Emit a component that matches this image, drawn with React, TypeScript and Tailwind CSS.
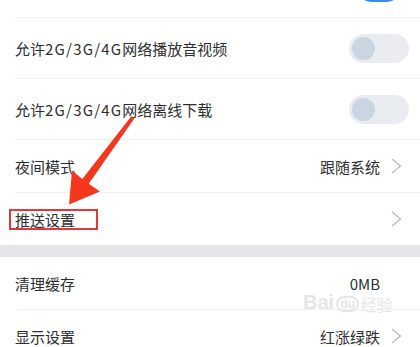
import React from "react";

function Toggle() {
  return (
    <div className="w-[60px] h-[29px] rounded-full bg-[#e9edf2] flex items-center px-[3px]">
      <div className="w-[23px] h-[23px] rounded-full bg-[#c9d5e1]" />
    </div>
  );
}

function Chevron() {
  return (
    <svg width="13" height="16" viewBox="0 0 13 16" className="shrink-0">
      <path d="M2 1 L10.5 8 L2 15" fill="none" stroke="#b4b8bd" strokeWidth="1.2" />
    </svg>
  );
}

function Sep({ left = "ml-[15px]" }: { left?: string }) {
  return <div className={`h-px bg-[#eef0f2] ${left}`} />;
}

function ToggleRow({ pre, latin, post }: { pre: string; latin: string; post: string }) {
  return (
    <div className="h-[60px] flex items-center justify-between pl-[15px] pr-[11px]">
      <span className="text-[15px] text-[#2e2e2e] leading-none">
        {pre}
        <span className="tracking-[1.2px]">{latin}</span>
        {post}
      </span>
      <Toggle />
    </div>
  );
}

function ValueRow({ label, value, chevron = true, boxed = false }: { label: string; value?: string; chevron?: boolean; boxed?: boolean }) {
  return (
    <div className="h-[52px] flex items-center pl-[15px] pr-[17px]">
      <span className={`text-[15px] text-[#2e2e2e] leading-none ${boxed ? "-ml-[6px] pl-[4px] pr-[21px] py-[1px] border-2 border-[#e8353b]" : ""}`}>{label}</span>
      <div className="flex-1" />
      {value && <span className="text-[15px] text-[#2e2e2e] leading-none">{value}</span>}
      {chevron ? <div className="ml-[10px] flex items-center"><Chevron /></div> : <div className="w-[23px]" />}
    </div>
  );
}

export default function App() {
  return (
    <div
      className="relative w-[420px] h-[347px] overflow-hidden bg-white"
      style={{ fontFamily: '"Noto Sans CJK SC", "Noto Sans", sans-serif' }}
    >
      <div className="h-[17px] overflow-hidden flex justify-end pr-[19px]">
        <div className="w-[44px] h-[29px] -mt-[27px] rounded-full bg-[#3d8aee]" />
      </div>
      <Sep />
      <ToggleRow pre="允许" latin="2G/3G/4G" post="网络播放音视频" />
      <Sep />
      <ToggleRow pre="允许" latin="2G/3G/4G" post="网络离线下载" />
      <Sep />
      <ValueRow label="夜间模式" value="跟随系统" />
      <Sep />
      <ValueRow label="推送设置" boxed />
      <div className="h-[12px] bg-[#e4e6e8]" />
      <ValueRow label="清理缓存" value="0MB" chevron={false} />
      <Sep left="ml-[18px]" />
      <ValueRow label="显示设置" value="红涨绿跌" />

      <div className="absolute left-[303px] top-[292px] flex items-end gap-[2px] text-[#e6e6e6] leading-none pointer-events-none" style={{ fontFamily: '"Liberation Sans", sans-serif' }}>
        <span className="text-[20px] font-bold">Bai</span>
        <span className="text-[12px] font-bold border-2 border-[#e6e6e6] rounded-full px-[2px]">du</span>
        <span className="text-[16px]" style={{ fontFamily: '"Noto Sans CJK SC", sans-serif' }}>经验</span>
      </div>

      <svg className="absolute left-0 top-0 pointer-events-none" width="420" height="347" viewBox="0 0 420 347">
        <polygon
          points="131.5,116 134.5,118.2 88.7,183.8 100,191.5 69,204.5 72,170.5 82.3,179"
          fill="#f4371d"
        />
      </svg>
    </div>
  );
}
